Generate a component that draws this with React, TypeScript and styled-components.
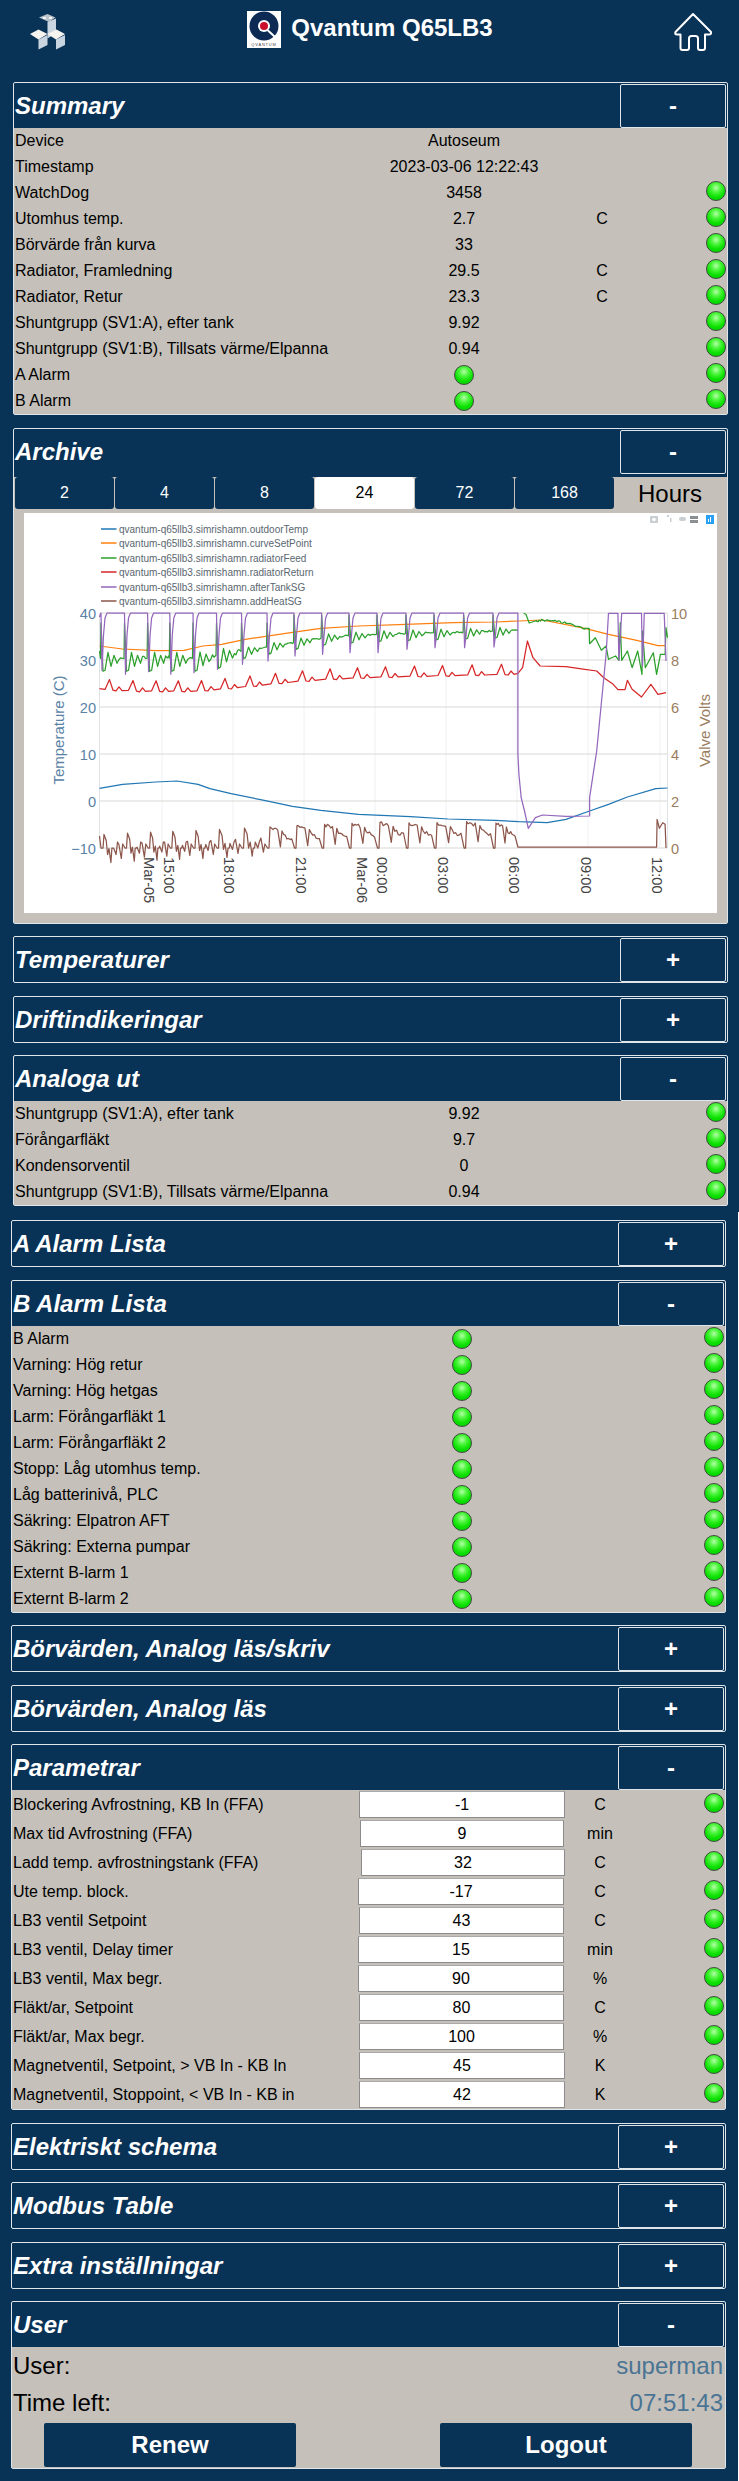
import React from "react";
import styled, { createGlobalStyle } from "styled-components";

const NAVY = "#083256";
const STONE = "#c5c0ba";
const EDGE = "#dfe6ea";

const GlobalStyle = createGlobalStyle`
  html, body {
    margin: 0;
    padding: 0;
    background: ${NAVY};
  }
  body {
    font-family: "Liberation Sans", Arial, sans-serif;
    color: #000;
  }
  * { box-sizing: border-box; }
`;

const Page = styled.div`
  width: 739px;
  min-height: 2481px;
  background: ${NAVY};
`;

const TopBar = styled.header`
  height: 82px;
  padding: 11px 27px 0 30px;
  display: flex;
  justify-content: space-between;
  align-items: flex-start;
`;

const BrandMark = styled.svg`
  width: 36px;
  height: 38px;
  margin-top: 2px;
`;

const HomeMark = styled.svg`
  width: 38px;
  height: 39px;
  margin-top: 1px;
`;

const TitleGroup = styled.div`
  display: flex;
  align-items: flex-start;
  gap: 10px;
`;

const TitleLogo = styled.svg`
  width: 34px;
  height: 37px;
`;

const PageTitle = styled.h1`
  margin: 0;
  font-size: 24px;
  line-height: 33px;
  font-weight: 700;
  color: #fff;
`;

const Column = styled.div<{ $second?: boolean }>`
  display: flex;
  flex-direction: column;
  gap: 12.5px;
  width: 739px;
  padding-left: ${(p) => (p.$second ? 11 : 13)}px;
  padding-top: ${(p) => (p.$second ? 8 : 0)}px;
  padding-bottom: ${(p) => (p.$second ? 13 : 0)}px;
  margin-top: ${(p) => (p.$second ? 6 : 0)}px;
  border-right: 1px solid ${(p) => (p.$second ? "#fff" : NAVY)};
`;

const PanelBox = styled.section`
  width: 715px;
  border: 1px solid ${EDGE};
  border-radius: 2px;
`;

const PanelHead = styled.div`
  height: 45px;
  display: flex;
  justify-content: space-between;
  align-items: flex-start;
`;

const PanelTitle = styled.h2`
  margin: 0;
  padding-left: 1px;
  font-size: 24px;
  line-height: 45px;
  font-weight: 700;
  font-style: italic;
  color: #fff;
`;

const Toggle = styled.button`
  width: 106px;
  height: 44px;
  margin: 1px 1px 0 0;
  padding: 0;
  background: ${NAVY};
  border: 1px solid ${EDGE};
  border-radius: 2px;
  font-family: inherit;
  font-size: 24px;
  font-weight: 700;
  color: #fff;
`;

const PanelBody = styled.div`
  background: ${STONE};
`;

const Row = styled.div<{ $height?: number }>`
  height: ${(p) => p.$height ?? 26}px;
  display: grid;
  grid-template-columns: 343px 214px 62px 1fr;
  align-items: center;
  font-size: 16px;
`;

const Label = styled.div`
  padding-left: 1px;
  white-space: nowrap;
`;

const Cell = styled.div`
  display: flex;
  justify-content: center;
  text-align: center;
  white-space: nowrap;
`;

const Led = styled.span<{ $edge?: boolean }>`
  display: block;
  width: 20px;
  height: 20px;
  border-radius: 50%;
  border: 1.5px solid #3f4a3f;
  background: radial-gradient(circle at 50% 32%, #b4ffa8 0%, #4cf53c 30%, #0be000 62%, #00c800 100%);
  ${(p) => p.$edge && "justify-self: end; margin: 0 1px 4px 0;"}
`;

const ValueInput = styled.input<{ $left: number; $right: number }>`
  display: block;
  width: ${(p) => p.$right - p.$left}px;
  height: 27px;
  justify-self: start;
  margin-left: ${(p) => p.$left - 355}px;
  padding: 0;
  background: #fff;
  border: 1px solid #8b8b8b;
  border-top-color: #a9a9a9;
  border-radius: 0;
  font-family: inherit;
  font-size: 16px;
  text-align: center;
  color: #000;
`;

const RangeBar = styled.div`
  display: flex;
  align-items: stretch;
  height: 32px;
  margin-top: 3px;
  padding-left: 1px;
`;

const RangeButtons = styled.div`
  display: grid;
  grid-template-columns: repeat(6, 99px);
  gap: 1px;
  width: 598px;
`;

const RangeButton = styled.button<{ $active?: boolean }>`
  padding: 0;
  border: none;
  border-radius: 3px;
  background: ${(p) => (p.$active ? "#fff" : NAVY)};
  color: ${(p) => (p.$active ? "#000" : "#fff")};
  font-family: inherit;
  font-size: 16px;
`;

const RangeUnit = styled.div`
  flex: 1;
  text-align: center;
  font-size: 24px;
  line-height: 34px;
`;

const ChartSheet = styled.div`
  width: 693px;
  height: 400px;
  margin: 4px 0 0 10px;
  background: #fff;
`;

const ChartSvg = styled.svg`
  display: block;
  width: 693px;
  height: 400px;
  font-family: "Liberation Sans", Arial, sans-serif;
`;

const ChartFooter = styled.div`
  height: 10px;
`;

const UserRow = styled.div`
  height: 37px;
  padding: 0 2px 0 1px;
  display: flex;
  justify-content: space-between;
  align-items: center;
  font-size: 24px;
`;

const UserValue = styled.span`
  color: #4a7494;
`;

const UserActions = styled.div`
  display: flex;
  gap: 144px;
  padding: 2px 0 1px 32px;
`;

const ActionButton = styled.button`
  width: 252px;
  height: 44px;
  padding: 0;
  border: none;
  border-radius: 2px;
  background: ${NAVY};
  color: #fff;
  font-family: inherit;
  font-size: 24px;
  font-weight: 700;
`;

// chart data, read off the reference in zoom coordinates (x / 2.12, 420 + y / 3)
const zx = (x: number) => x / 2.12;
const zy = (y: number) => 420 + y / 3;
const rnd = (i: number) => {
  const v = Math.sin(i * 12.9898) * 43758.5453;
  return v - Math.floor(v);
};
type Pt = [number, number];
const toPath = (pts: Pt[]) => pts.map(([x, y]) => `${x.toFixed(1)},${y.toFixed(1)}`).join(" ");
const fromZoom = (pts: Pt[]): Pt[] => pts.map(([x, y]) => [zx(x), zy(y)]);
const lerp = (ctrl: Pt[], x: number) => {
  const pts = fromZoom(ctrl);
  if (x <= pts[0][0]) return pts[0][1];
  for (let i = 1; i < pts.length; i++) {
    if (x <= pts[i][0]) {
      const t = (x - pts[i - 1][0]) / (pts[i][0] - pts[i - 1][0]);
      return pts[i - 1][1] + t * (pts[i][1] - pts[i - 1][1]);
    }
  }
  return pts[pts.length - 1][1];
};
const TOP = 612;
const BOTTOM = 847;
const DROP_X = [102, 125.5, 148.6, 170.8, 194, 217.5, 242.5, 268, 295, 322.6, 350, 378, 407, 435, 464.6, 494];
const DROP_Y = [748, 760, 752, 760, 755, 745, 730, 720, 705, 700, 695, 695, 685, 680, 680, 678].map(zy);
const CUT_X = zx(1098);

const blue = fromZoom([
  [211, 1102], [260, 1090], [330, 1083], [375, 1080], [420, 1090], [445, 1103], [490, 1118], [560, 1138],
  [620, 1156], [680, 1168], [760, 1180], [870, 1187], [950, 1194], [1050, 1198], [1100, 1202], [1160, 1205],
  [1200, 1195], [1250, 1170], [1290, 1150], [1330, 1128], [1390, 1103], [1415, 1101],
]);
const orange = fromZoom([
  [211, 675], [260, 684], [330, 689], [390, 688], [430, 675], [470, 670], [520, 655], [620, 634], [680, 622],
  [760, 615], [860, 610], [960, 605], [1050, 603], [1100, 600], [1150, 597], [1240, 622], [1290, 640],
  [1350, 658], [1395, 674], [1410, 674],
]);

const greenBase: Pt[] = [[211, 712], [300, 712], [420, 712], [520, 690], [620, 665], [700, 648], [800, 640], [900, 636], [1000, 632], [1095, 628]];
const redBase: Pt[] = [[211, 803], [300, 808], [420, 808], [520, 795], [620, 780], [700, 772], [800, 766], [900, 763], [1000, 760], [1095, 757]];
const brownBase: Pt[] = [[211, 1235], [300, 1228], [420, 1222], [520, 1215], [620, 1208], [700, 1203], [800, 1198], [900, 1200], [1000, 1195], [1095, 1205]];

const buildGreen = (): Pt[] => {
  const pts: Pt[] = [[99.5, 650]];
  DROP_X.forEach((x, i) => {
    const next = DROP_X[i + 1] ?? CUT_X;
    const amp = i < 6 ? 1 : 0.55;
    const b = (v: number) => lerp(greenBase, v);
    pts.push([x - 1.5, b(x)], [x - 1, i < 8 ? 622 : 614], [x + 1, b(x) + 13 * amp]);
    pts.push([x + 3, b(x + 3) + 12 * amp], [x + 6, b(x + 6) - 6 * amp], [x + 9, b(x + 9) + 8 * amp], [x + 12, b(x + 12) - 3 * amp], [x + 15, b(x + 15) + 5 * amp]);
    for (let v = x + 17; v < next - 2; v += 1.5) {
      pts.push([v, b(v) + (rnd(v * 3) - 0.5) * (i < 6 ? 5 : 2)]);
    }
  });
  pts.push([CUT_X, lerp(greenBase, CUT_X)]);
  return pts;
};

const greenTail = (): Pt[] => {
  const ctrl = fromZoom([
    [1110, 577], [1115, 580], [1122, 606], [1135, 600], [1150, 597], [1175, 598], [1200, 606], [1240, 622],
    [1249, 622], [1250, 668], [1262, 650], [1275, 688], [1285, 675], [1290, 715], [1305, 705], [1312, 718],
    [1315, 605], [1318, 718], [1330, 690], [1340, 740], [1352, 690], [1361, 760], [1362, 630], [1368, 740],
    [1385, 695], [1392, 760], [1400, 700], [1410, 700], [1412, 620], [1415, 650],
  ]);
  const out: Pt[] = [];
  ctrl.forEach((p, i) => {
    out.push(p);
    const q = ctrl[i + 1];
    if (q && i > 2 && i < 7) {
      for (let t = 0.1; t < 1; t += 0.1) {
        out.push([p[0] + (q[0] - p[0]) * t, p[1] + (q[1] - p[1]) * t + (rnd(i * 40 + t * 90) - 0.5) * 2.2]);
      }
    }
  });
  return out;
};

const buildRed = (): Pt[] => {
  const pts: Pt[] = [[99.5, lerp(redBase, 99.5)]];
  DROP_X.forEach((x) => {
    const b = (v: number) => lerp(redBase, v);
    pts.push([x + 3, b(x + 3) + 0.5], [x + 7.5, b(x + 7.5) - 9.5], [x + 11, b(x + 11) + 1], [x + 14, b(x + 14) + 1.5], [x + 17, b(x + 17) - 2.5], [x + 20, b(x + 20) + 1]);
  });
  pts.push(
    ...fromZoom([
      [1098, 757], [1108, 740], [1118, 660], [1130, 710], [1145, 735], [1200, 737], [1240, 745], [1265, 750],
      [1280, 770], [1300, 790], [1310, 806], [1325, 806], [1330, 778], [1340, 805], [1360, 828], [1380, 790],
      [1395, 820], [1412, 815],
    ]),
  );
  return pts;
};

const buildPurple = (): Pt[] => {
  const pts: Pt[] = [[99.5, TOP + 4]];
  DROP_X.forEach((x, i) => {
    pts.push([x - 1, TOP], [x, DROP_Y[i]], [x + 1.5, TOP + 22], [x + 3, TOP + 5], [x + 5, TOP]);
  });
  pts.push(
    [CUT_X, TOP],
    ...fromZoom([
      [1098, 1000], [1100, 1060], [1105, 1130], [1112, 1170], [1120, 1222], [1135, 1190], [1150, 1182], [1200, 1186],
      [1250, 1185], [1250, 1130], [1265, 990], [1285, 700], [1290, 577], [1310, 577], [1312, 718], [1318, 577],
      [1360, 577], [1362, 735], [1366, 577], [1408, 577], [1412, 720],
    ]),
  );
  return pts;
};

// addHeatSG: early cycles fall to zero twice, later ones hold high with a notch
const buildBrown = (): Pt[] => {
  const pts: Pt[] = [[99.5, BOTTOM - 12], [101, BOTTOM]];
  DROP_X.forEach((x, i) => {
    const next = DROP_X[i + 1] ?? CUT_X;
    const span = next - x;
    const b = (v: number) => lerp(brownBase, v);
    pts.push([x - 0.5, BOTTOM], [x + 1, BOTTOM], [x + 2, b(x) + 2]);
    if (i < 7) {
      pts.push([x + span * 0.18, b(x) + 8], [x + span * 0.24, b(x) + 22], [x + span * 0.3, b(x) + 16], [x + span * 0.38, b(x) + 30]);
      pts.push([x + span * 0.42, BOTTOM], [x + span * 0.47, BOTTOM], [x + span * 0.5, b(x) + 16], [x + span * 0.6, b(x) + 22]);
      pts.push([x + span * 0.66, BOTTOM - 6], [x + span * 0.72, b(x) + 12], [x + span * 0.82, b(x) + 26], [x + span * 0.88, BOTTOM - 4]);
    } else {
      for (let t = 0.12; t < 0.42; t += 0.06) {
        pts.push([x + span * t, b(x) + 2 + t * 8 + (rnd(x + t * 50) - 0.5) * 4]);
      }
      pts.push([x + span * 0.46, b(x) + 22], [x + span * 0.52, b(x) + 6]);
      for (let t = 0.58; t < 0.94; t += 0.06) {
        pts.push([x + span * t, b(x) + 4 + t * 12 + (rnd(x * 2 + t * 50) - 0.5) * 4]);
      }
    }
  });
  pts.push(
    [CUT_X, BOTTOM - 1],
    ...fromZoom([[1392, 1278], [1393, 1195], [1398, 1222], [1405, 1205], [1410, 1210], [1412, 1281]]),
  );
  return pts;
};

const SERIES = [
  { name: "outdoorTemp", color: "#1f77b4", y: 528, lines: [blue] },
  { name: "curveSetPoint", color: "#ff7f0e", y: 542, lines: [orange] },
  { name: "radiatorFeed", color: "#2ca02c", y: 557, lines: [buildGreen(), greenTail()] },
  { name: "radiatorReturn", color: "#d62728", y: 571, lines: [buildRed()] },
  { name: "afterTankSG", color: "#9467bd", y: 586, lines: [buildPurple()] },
  { name: "addHeatSG", color: "#8c564b", y: 600, lines: [buildBrown()] },
];

const GRID_Y = [612, 659, 706, 753, 800, 847];
const LEFT_TICKS = ["40", "30", "20", "10", "0", "\u221210"];
const RIGHT_TICKS = ["10", "8", "6", "4", "2", "0"];
const HOUR_GRID = [162, 233, 304, 375, 446, 517, 588, 660];
const TIME_TICKS: [number, string][] = [
  [149, "Mar-05"], [169, "15:00"], [229, "18:00"], [301, "21:00"], [362, "Mar-06"],
  [382, "00:00"], [443, "03:00"], [514, "06:00"], [586, "09:00"], [657, "12:00"],
];

const ArchiveChart = () => (
  <ChartSvg viewBox="24 512 693 400">
    {HOUR_GRID.map((x) => (
      <line key={x} x1={x} x2={x} y1={TOP} y2={BOTTOM} stroke="#eef0f2" />
    ))}
    {GRID_Y.map((y) => (
      <line key={y} x1={99.5} x2={667.5} y1={y} y2={y} stroke="#d8d8d4" strokeWidth={1.2} />
    ))}
    <line x1={99.5} x2={99.5} y1={TOP} y2={BOTTOM} stroke="#dfe3e6" />
    <line x1={667.5} x2={667.5} y1={TOP} y2={BOTTOM} stroke="#dfe3e6" />
    {SERIES.map((s) =>
      s.lines.map((pts, i) => (
        <polyline key={s.name + i} points={toPath(pts)} fill="none" stroke={s.color} strokeWidth={1.25} strokeLinejoin="round" />
      )),
    )}
    {SERIES.map((s) => (
      <g key={s.name}>
        <line x1={101} x2={116.5} y1={s.y} y2={s.y} stroke={s.color} strokeWidth={1.5} />
        <text x={119} y={s.y + 3.5} fontSize={10} fill="#5a6670">
          qvantum-q65llb3.simrishamn.{s.name}
        </text>
      </g>
    ))}
    {GRID_Y.map((y, i) => (
      <g key={y} fontSize={14.6}>
        <text x={96} y={y + 5.5} textAnchor="end" fill="#5a83a6">
          {LEFT_TICKS[i]}
        </text>
        <text x={671} y={y + 5.5} fill="#9a7d5e">
          {RIGHT_TICKS[i]}
        </text>
      </g>
    ))}
    <text x={64} y={729} fontSize={15} fill="#5a83a6" textAnchor="middle" transform="rotate(-90 64 729)">
      Temperature (C)
    </text>
    <text x={710} y={729.5} fontSize={15} fill="#9a7d5e" textAnchor="middle" transform="rotate(-90 710 729.5)">
      Valve Volts
    </text>
    {TIME_TICKS.map(([x, t]) => (
      <text key={t} x={x - 5} y={856} fontSize={14.6} fill="#444" transform={`rotate(90 ${x - 5} 856)`}>
        {t}
      </text>
    ))}
    <g fill="#c9ced2">
      <rect x={650} y={515} width={8} height={7} rx={1} />
      <rect x={667} y={514} width={2} height={2} />
      <rect x={670} y={517} width={1.5} height={4} />
      <rect x={679} y={516} width={7} height={4} rx={2} />
    </g>
    <circle cx={654} cy={518.5} r={1.8} fill="#fff" />
    <rect x={690} y={515} width={8} height={3} fill="#8a8f93" />
    <rect x={690} y={519} width={8} height={3} fill="#8a8f93" />
    <rect x={706} y={514} width={8} height={9} fill="#2aa0f5" />
    <rect x={708} y={518} width={1} height={3} fill="#fff" />
    <rect x={710} y={516} width={1} height={5} fill="#fff" />
  </ChartSvg>
);

const Panel = ({ title, open, children }: { title: string; open?: boolean; children?: React.ReactNode }) => (
  <PanelBox>
    <PanelHead>
      <PanelTitle>{title}</PanelTitle>
      <Toggle>{open ? "-" : "+"}</Toggle>
    </PanelHead>
    {open && <PanelBody>{children}</PanelBody>}
  </PanelBox>
);

type Reading = { label: string; value?: string; unit?: string; led?: boolean; valueLed?: boolean };

const ReadingRow = ({ label, value, unit, led = true, valueLed }: Reading) => (
  <Row>
    <Label>{label}</Label>
    <Cell>{valueLed ? <Led /> : value}</Cell>
    <Cell>{unit}</Cell>
    {led ? <Led $edge /> : <span />}
  </Row>
);

const SUMMARY: Reading[] = [
  { label: "Device", value: "Autoseum", led: false },
  { label: "Timestamp", value: "2023-03-06 12:22:43", led: false },
  { label: "WatchDog", value: "3458" },
  { label: "Utomhus temp.", value: "2.7", unit: "C" },
  { label: "Börvärde från kurva", value: "33" },
  { label: "Radiator, Framledning", value: "29.5", unit: "C" },
  { label: "Radiator, Retur", value: "23.3", unit: "C" },
  { label: "Shuntgrupp (SV1:A), efter tank", value: "9.92" },
  { label: "Shuntgrupp (SV1:B), Tillsats värme/Elpanna", value: "0.94" },
  { label: "A Alarm", valueLed: true },
  { label: "B Alarm", valueLed: true },
];

const ANALOG: Reading[] = [
  { label: "Shuntgrupp (SV1:A), efter tank", value: "9.92" },
  { label: "Förångarfläkt", value: "9.7" },
  { label: "Kondensorventil", value: "0" },
  { label: "Shuntgrupp (SV1:B), Tillsats värme/Elpanna", value: "0.94" },
];

const B_ALARMS = [
  "B Alarm", "Varning: Hög retur", "Varning: Hög hetgas", "Larm: Förångarfläkt 1", "Larm: Förångarfläkt 2",
  "Stopp: Låg utomhus temp.", "Låg batterinivå, PLC", "Säkring: Elpatron AFT", "Säkring: Externa pumpar",
  "Externt B-larm 1", "Externt B-larm 2",
];

const PARAMS = [
  { label: "Blockering Avfrostning, KB In (FFA)", value: "-1", unit: "C", left: 359, right: 565 },
  { label: "Max tid Avfrostning (FFA)", value: "9", unit: "min", left: 360, right: 564 },
  { label: "Ladd temp. avfrostningstank (FFA)", value: "32", unit: "C", left: 361, right: 565 },
  { label: "Ute temp. block.", value: "-17", unit: "C", left: 358, right: 564 },
  { label: "LB3 ventil Setpoint", value: "43", unit: "C", left: 359, right: 564 },
  { label: "LB3 ventil, Delay timer", value: "15", unit: "min", left: 358, right: 564 },
  { label: "LB3 ventil, Max begr.", value: "90", unit: "%", left: 358, right: 564 },
  { label: "Fläkt/ar, Setpoint", value: "80", unit: "C", left: 359, right: 564 },
  { label: "Fläkt/ar, Max begr.", value: "100", unit: "%", left: 359, right: 564 },
  { label: "Magnetventil, Setpoint, > VB In - KB In", value: "45", unit: "K", left: 359, right: 565 },
  { label: "Magnetventil, Stoppoint, < VB In - KB in", value: "42", unit: "K", left: 359, right: 565 },
];

const RANGES = ["2", "4", "8", "24", "72", "168"];

export default function App() {
  return (
    <Page>
      <GlobalStyle />
      <TopBar>
        <BrandMark viewBox="10 8 36 38">
          <path d="M19 12.5 L27.5 9 L35.5 12.5 L29 17 Z" fill="#b9c3cb" />
          <path d="M23 12 h3 v2 h-3 z M29 12 h3 v2 h-3 z" fill="#f4f3ef" />
          <path d="M27.5 17 L36 13.5 V28 L27.5 33.5 Z" fill="#c9d6e2" />
          <path d="M10 29 L18.5 24.5 L27.5 29 L18.5 34.5 Z" fill="#f6f4ee" />
          <path d="M18.5 34.5 L27.5 30 V40 L18.5 44.5 Z" fill="#c9d6e2" />
          <path d="M27.5 29 L36.5 24.5 L45 29 L36 34.5 Z" fill="#f6f4ee" />
          <path d="M36 34.5 L45 30 V40 L36 44.5 Z" fill="#c8d4e0" />
        </BrandMark>
        <TitleGroup>
          <TitleLogo viewBox="0 0 34 37">
            <rect width="34" height="37" fill="#fff" />
            <circle cx="17" cy="15" r="14.5" fill="#0d2a55" />
            <circle cx="17" cy="15" r="6" fill="#fff" />
            <circle cx="17" cy="15" r="4" fill="#c8102e" />
            <line x1="21" y1="19.5" x2="28" y2="26" stroke="#fff" strokeWidth="2" />
            <text x="17" y="35" fontSize="4" textAnchor="middle" letterSpacing="0.8" fill="#444" fontFamily="Liberation Sans">
              QVANTUM
            </text>
          </TitleLogo>
          <PageTitle>Qvantum Q65LB3</PageTitle>
        </TitleGroup>
        <HomeMark viewBox="674 12 38 39" fill="none" stroke="#fff" strokeWidth="2" strokeLinejoin="round" strokeLinecap="round">
          <path d="M693 14 L711 32 Q711.5 34.5 709 34.5 L705 34.5 V48 Q705 50 703 50 H700 Q698 50 698 48 V38.5 Q698 36 695.5 36 H691.5 Q689 36 689 38.5 V48 Q689 50 687 50 H682.5 Q680.5 50 680.5 48 V34.5 H677 Q674.5 34.5 675.5 32 Z" />
        </HomeMark>
      </TopBar>

      <Column>
        <Panel title="Summary" open>
          {SUMMARY.map((r) => (
            <ReadingRow key={r.label} {...r} />
          ))}
        </Panel>
        <Panel title="Archive" open>
          <RangeBar>
            <RangeButtons>
              {RANGES.map((r) => (
                <RangeButton key={r} $active={r === "24"}>
                  {r}
                </RangeButton>
              ))}
            </RangeButtons>
            <RangeUnit>Hours</RangeUnit>
          </RangeBar>
          <ChartSheet>
            <ArchiveChart />
          </ChartSheet>
          <ChartFooter />
        </Panel>
        <Panel title="Temperaturer" />
        <Panel title="Driftindikeringar" />
        <Panel title="Analoga ut" open>
          {ANALOG.map((r) => (
            <ReadingRow key={r.label} {...r} />
          ))}
        </Panel>
      </Column>

      <Column $second>
        <Panel title="A Alarm Lista" />
        <Panel title="B Alarm Lista" open>
          {B_ALARMS.map((label) => (
            <ReadingRow key={label} label={label} valueLed />
          ))}
        </Panel>
        <Panel title="Börvärden, Analog läs/skriv" />
        <Panel title="Börvärden, Analog läs" />
        <Panel title="Parametrar" open>
          {PARAMS.map((p) => (
            <Row key={p.label} $height={29}>
              <Label>{p.label}</Label>
              <ValueInput readOnly value={p.value} $left={p.left} $right={p.right} />
              <Cell>{p.unit}</Cell>
              <Led $edge />
            </Row>
          ))}
        </Panel>
        <Panel title="Elektriskt schema" />
        <Panel title="Modbus Table" />
        <Panel title="Extra inställningar" />
        <Panel title="User" open>
          <UserRow>
            <span>User:</span>
            <UserValue>superman</UserValue>
          </UserRow>
          <UserRow>
            <span>Time left:</span>
            <UserValue>07:51:43</UserValue>
          </UserRow>
          <UserActions>
            <ActionButton>Renew</ActionButton>
            <ActionButton>Logout</ActionButton>
          </UserActions>
        </Panel>
      </Column>
    </Page>
  );
}
